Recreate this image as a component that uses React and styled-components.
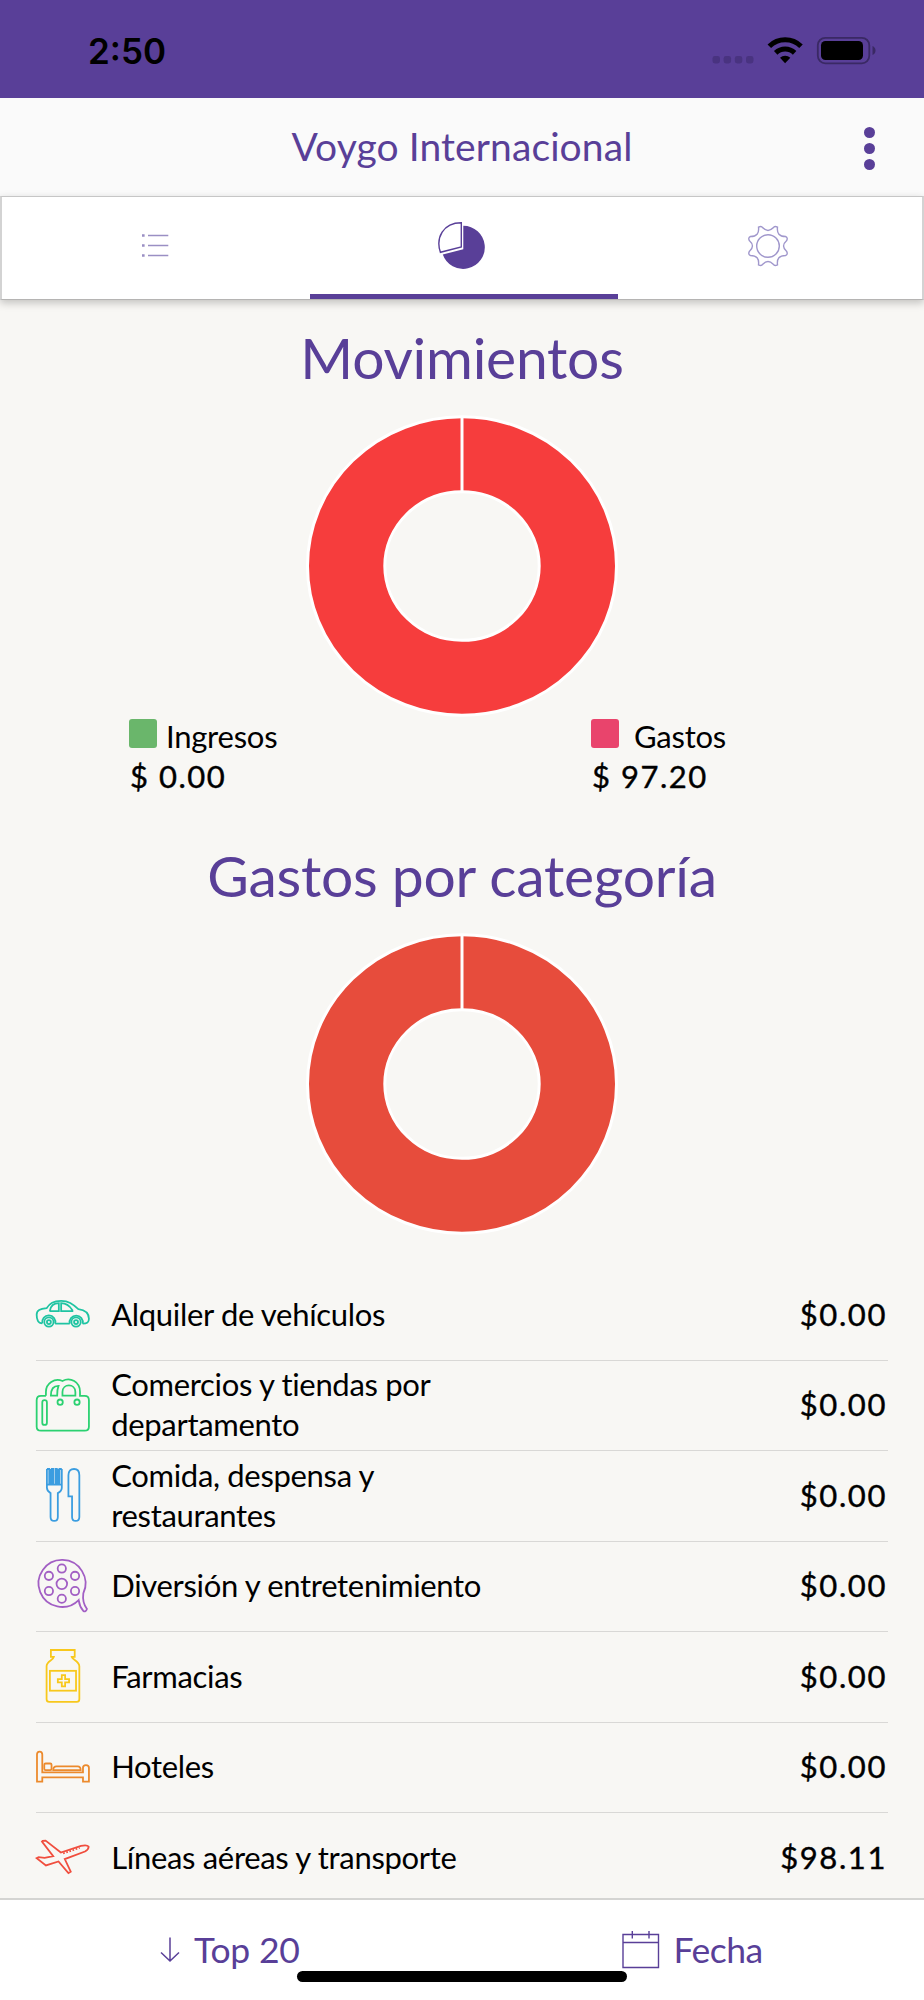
import styled, { createGlobalStyle } from "styled-components";

const categories = [
  { name: "Alquiler de vehículos", amount: "$0.00", color: "#1fc4a2", icon: <CarIcon /> },
  { name: "Comercios y tiendas por departamento", amount: "$0.00", color: "#2bd171", icon: <BagIcon /> },
  { name: "Comida, despensa y restaurantes", amount: "$0.00", color: "#3b9de0", icon: <CutleryIcon /> },
  { name: "Diversión y entretenimiento", amount: "$0.00", color: "#a25fc4", icon: <ReelIcon /> },
  { name: "Farmacias", amount: "$0.00", color: "#f8c81c", icon: <BottleIcon /> },
  { name: "Hoteles", amount: "$0.00", color: "#ec8a2c", icon: <BedIcon /> },
  { name: "Líneas aéreas y transporte", amount: "$98.11", color: "#f04e3e", icon: <PlaneIcon /> },
];

function CarIcon() {
  return (
    <>
      <path d="M19 110C6 110 2 98 2 84C2 70 12 66 32 64C42 50 52 42 76 42C98 42 110 50 128 67C150 70 160 78 160 96C160 106 156 111 141 111M58 111H102" />
      <path d="M19 110A20 20 0 1 1 58 111M102 111A20 20 0 1 1 141 111" />
      <path d="M42 72C45 54 54 49 69 49V73H44ZM76 49C92 49 101 56 110 70V73H76Z" />
      <circle cx="39" cy="106" r="14" />
      <circle cx="39" cy="106" r="6" />
      <circle cx="121" cy="106" r="14" />
      <circle cx="121" cy="106" r="6" />
    </>
  );
}

function BagIcon() {
  return (
    <>
      <path d="M30 54H15Q2 54 2 67V147Q2 159 15 159H147Q160 159 160 147V67Q160 54 147 54H133V42C133 12 104 -4 80 9C56 -1 30 16 30 42V54" />
      <path d="M45 53C45 34 52 24 68 24Q64 34 64 53ZM80 53V42C80 16 119 16 119 42V53Z" />
      <circle cx="73" cy="73" r="8" />
      <circle cx="124" cy="73" r="8" />
      <rect x="19" y="67" width="14" height="75" rx="7" />
    </>
  );
}

function CutleryIcon() {
  return (
    <>
      <path d="M33 3V60Q33 70 44 76V148Q44 160 55 160Q66 160 66 148V76Q78 70 78 60V3" />
      <path d="M33 3H40V50H33M48 50V3H52V50M59 50V3H63V50M71 50V3H78M40 50H78M44 3V50M67 3V50" />
      <path d="M98 84V22C98 8 105 3 115 3S131 10 131 22V148Q131 160 120 160T109 148V86H98Z" />
    </>
  );
}

function ReelIcon() {
  return (
    <>
      <path d="M129 124A71 71 0 1 1 143 104C140 126 145 139 154 151Q150 162 143 157C137 150 131 138 129 124Z" />
      <circle cx="78" cy="75" r="16" />
      <circle cx="78" cy="29" r="12.5" />
      <circle cx="39" cy="51" r="12.5" />
      <circle cx="118" cy="51" r="12.5" />
      <circle cx="39" cy="97" r="12.5" />
      <circle cx="118" cy="97" r="12.5" />
      <circle cx="78" cy="120" r="12.5" />
    </>
  );
}

function BottleIcon() {
  return (
    <>
      <path d="M45 3H117V24H108C110 32 131 38 131 52V152Q131 160 123 160H40Q32 160 32 152V52C32 38 52 34 54 24H45Z" />
      <rect x="42" y="66" width="79" height="60" />
      <path d="M78 79H88V91H100V101H88V113H78V101H66V91H78Z" />
    </>
  );
}

function BedIcon() {
  return (
    <>
      <path d="M3 126V44Q3 35 11 35T19 44V98H142V84Q142 76 151 76T160 84V126H142V113H19V126Z" />
      <rect x="25" y="71" width="22" height="20" rx="4" />
      <path d="M52 91Q52 80 62 80H126Q135 80 135 91Z" />
    </>
  );
}

function PlaneIcon() {
  return (
    <>
      <path d="M18 35L20 33L29 32L75 68L136 48Q154 44 159 50Q160 58 148 65L87 88L105 126L98 130L68 95L30 107L2 85L8 82L26 84L52 79Z" />
      <path d="M82 71L132 54" strokeDasharray="5 5" />
    </>
  );
}

function Donut({ color }) {
  return (
    <DonutSvg viewBox="-156 -151 312 302">
      <path
        fill={color}
        fillRule="evenodd"
        d="M0 -149.2A154.5 149.2 0 1 1 0 149.2A154.5 149.2 0 1 1 0 -149.2ZM0 -74.3A77.2 74.3 0 1 0 0 74.3A77.2 74.3 0 1 0 0 -74.3Z"
      />
      <path d="M0 -149.2V-74.3" />
    </DonutSvg>
  );
}

export default function App() {
  return (
    <Screen>
      <GlobalStyle />
      <StatusBar>
        <Clock>2:50</Clock>
        <svg width="162" height="30" viewBox="0 0 162 30">
          <g fill="#493380">
            <rect x="-1.5" y="20" width="7.5" height="7.5" rx="2.4" />
            <rect x="9.6" y="20" width="7.5" height="7.5" rx="2.4" />
            <rect x="20.8" y="20" width="7.5" height="7.5" rx="2.4" />
            <rect x="32" y="20" width="7.5" height="7.5" rx="2.4" />
          </g>
          <g fill="none" stroke="#000" strokeWidth="5">
            <path d="M55.3 10.3A22.5 22.5 0 0 1 87 10.3" />
            <path d="M61.7 16.9A13.6 13.6 0 0 1 80.6 16.9" />
          </g>
          <path d="M71.1 27.3L66 21.8A7.5 7.5 0 0 1 76.3 21.8Z" />
          <rect x="103.8" y="1.8" width="51.5" height="25.5" rx="7.5" fill="none" stroke="#3a2964" strokeWidth="1.8" />
          <rect x="107" y="5" width="42" height="19" rx="4.5" />
          <path d="M158.5 10Q161.5 11.5 161.5 14.5T158.5 19Z" fill="#3a2964" />
        </svg>
      </StatusBar>
      <Header>
        <Title>Voygo Internacional</Title>
        <MenuButton>
          <Dot />
          <Dot />
          <Dot />
        </MenuButton>
      </Header>
      <Tabs>
        <Tab>
          <svg width="28" height="28" viewBox="0 0 28 28" fill="none" stroke="#9a8fc4">
            <path d="M0 3.5H2.6M0 13.5H2.6M0 23.5H2.6" strokeWidth="2.6" />
            <path d="M6 3.5H26.3M6 13.5H26.3M6 23.5H26.3" strokeWidth="1.6" />
          </svg>
        </Tab>
        <Tab $active>
          <svg width="48" height="48" viewBox="0 0 48 48">
            <path d="M25.3 3.7A21.6 21.6 0 1 1 4.8 32.4L25.3 27.3Z" fill="#593f98" />
            <path d="M23.3 0.8V25L2.4 30.3C-2.5 16 5 0.8 23.3 0.8Z" fill="#fff" stroke="#593f98" strokeWidth="1.4" />
          </svg>
        </Tab>
        <Tab>
          <svg width="42" height="42" viewBox="-21 -21 42 42" fill="none" stroke="#a097cc" strokeWidth="1.4">
            <circle r="11.3" />
            <path d="M-5.2 -18.2Q0 -12.8 5.2 -18.2Q6.5 -20.3 9.5 -18.8Q8.3 -9.5 17.5 -9.5Q20.3 -8.3 18.5 -5.2Q12.6 0 18.5 5.2Q20.3 8.3 17.5 9.5Q8.3 9.5 9.5 18.8Q6.5 20.3 5.2 18.2Q0 12.8 -5.2 18.2Q-6.5 20.3 -9.5 18.8Q-8.3 9.5 -17.5 9.5Q-20.3 8.3 -18.5 5.2Q-12.6 0 -18.5 -5.2Q-20.3 -8.3 -17.5 -9.5Q-8.3 -9.5 -9.5 -18.8Q-6.5 -20.3 -5.2 -18.2Z" />
          </svg>
        </Tab>
      </Tabs>
      <Content>
        <SectionTitle>Movimientos</SectionTitle>
        <Donut color="#f63d3d" />
        <Legend>
          <LegendItem>
            <LegendLabel $gap="9px">
              <Swatch $color="#6ab66b" />
              Ingresos
            </LegendLabel>
            <LegendAmount>$ 0.00</LegendAmount>
          </LegendItem>
          <LegendItem>
            <LegendLabel $gap="15px">
              <Swatch $color="#e9446c" />
              Gastos
            </LegendLabel>
            <LegendAmount>$ 97.20</LegendAmount>
          </LegendItem>
        </Legend>
        <SectionTitle>Gastos por categoría</SectionTitle>
        <Donut color="#e74c3c" />
        <List>
          {categories.map((category) => (
            <Row key={category.name}>
              <CategoryIcon viewBox="0 0 162 162" $color={category.color}>
                {category.icon}
              </CategoryIcon>
              <CategoryName>{category.name}</CategoryName>
              <Amount>{category.amount}</Amount>
            </Row>
          ))}
        </List>
      </Content>
      <Footer>
        <FooterButton $left="160px" $gap="14px" $spacing="-0.2px">
          <svg width="20" height="32" viewBox="0 0 20 32" fill="none" stroke="#593f98" strokeWidth="1.5">
            <path d="M10 4.5V28M1 19.5L10 28L19 19.5" />
          </svg>
          Top 20
        </FooterButton>
        <FooterButton $left="159px" $gap="14px" $spacing="-0.5px">
          <svg width="38" height="40" viewBox="0 0 38 40" fill="none" stroke="#593f98" strokeWidth="1.4">
            <path d="M1 5.5H36.5V38.5H1ZM1 13.5H36.5M10.3 2V9.5M27 2V9.5" />
          </svg>
          Fecha
        </FooterButton>
        <HomeIndicator />
      </Footer>
    </Screen>
  );
}

const GlobalStyle = createGlobalStyle`
  * {
    box-sizing: border-box;
  }
  body {
    margin: 0;
  }
`;

const Screen = styled.div`
  display: flex;
  flex-direction: column;
  width: 924px;
  height: 2000px;
  overflow: hidden;
  background: #f8f7f4;
  color: #000;
  font-family: Lato, "Liberation Sans", sans-serif;
`;

const StatusBar = styled.div`
  display: flex;
  flex: none;
  justify-content: space-between;
  height: 98px;
  padding: 36px 48px 0 88px;
  background: #593f98;

  svg {
    overflow: visible;
  }
`;

const Clock = styled.span`
  font-family: Inter, sans-serif;
  font-size: 35px;
  font-weight: 600;
  line-height: 30px;
`;

const Header = styled.header`
  position: relative;
  display: flex;
  flex: none;
  justify-content: center;
  height: 98px;
  padding-top: 24px;
  background: #fafafa;
`;

const Title = styled.h1`
  margin: 0;
  color: #593f98;
  font-size: 39px;
  font-weight: 400;
  line-height: 48px;
  letter-spacing: 0.1px;
`;

const MenuButton = styled.div`
  position: absolute;
  top: 28.5px;
  right: 49.5px;
  display: flex;
  flex-direction: column;
  gap: 5.2px;
`;

const Dot = styled.i`
  width: 11px;
  height: 11px;
  border-radius: 50%;
  background: #593f98;
`;

const Tabs = styled.nav`
  display: flex;
  flex: none;
  justify-content: center;
  height: 104px;
  border: solid #d3d3d3;
  border-width: 1px 2px;
  border-top-color: #c6c6c6;
  border-bottom-color: #b5b4b3;
  background: #fff;
  box-shadow: 0 3px 8px rgba(0, 0, 0, 0.22);
  z-index: 1;
`;

const Tab = styled.div`
  display: flex;
  flex: none;
  align-items: center;
  justify-content: center;
  width: ${(p) => (p.$active ? 308 : 306)}px;
  border-bottom: 5px solid ${(p) => (p.$active ? "#593f98" : "transparent")};

  &:first-child {
    padding-left: 1px;
  }
  &:last-child {
    padding-right: 3px;
  }
  &:nth-child(2) {
    margin: 0 -2px 0 2px;
    padding-right: 5px;
  }
`;

const Content = styled.main`
  flex: 1;
  min-height: 0;
  padding-top: 22px;
  overflow: hidden;
`;

const SectionTitle = styled.h2`
  margin: 0;
  color: #593f98;
  font-size: 57px;
  font-weight: 400;
  line-height: 70px;
  letter-spacing: -0.25px;
  text-align: center;
`;

const DonutSvg = styled.svg`
  display: block;
  width: 312px;
  height: 302px;
  margin: 22.5px auto 0;
  overflow: visible;
  stroke: #fff;
  stroke-width: 3;
`;

const Legend = styled.div`
  display: flex;
  margin: -1px 0 44.5px;
`;

const LegendItem = styled.div`
  flex: 1;
  padding-left: 129px;
  font-size: 31px;
  line-height: 40px;
`;

const LegendLabel = styled.div`
  display: flex;
  gap: ${(p) => p.$gap};
  letter-spacing: -0.25px;
`;

const Swatch = styled.span`
  width: 28px;
  height: 28.5px;
  margin-top: 3.5px;
  border-radius: 3px;
  background: ${(p) => p.$color};
`;

const LegendAmount = styled.div`
  padding-left: 1px;
  letter-spacing: 1.5px;
  -webkit-text-stroke: 0.4px #000;
`;

const List = styled.ul`
  margin: 35.5px 36px 0;
  padding: 0;
  list-style: none;
`;

const Row = styled.li`
  display: flex;
  align-items: center;
  height: 90.5px;
  padding-bottom: 2px;
  border-bottom: 1px solid #d9d8d6;
`;

const CategoryIcon = styled.svg`
  flex: none;
  width: 53.6px;
  height: 53.6px;
  margin: 1px 22px 0 -0.4px;
  overflow: visible;
  fill: none;
  stroke: ${(p) => p.$color};
  stroke-width: 5.4;
`;

const CategoryName = styled.span`
  width: 390px;
  font-size: 31px;
  line-height: 40px;
  letter-spacing: -0.32px;
`;

const Amount = styled.span`
  margin-left: auto;
  padding-right: 1px;
  font-size: 31px;
  line-height: 40px;
  letter-spacing: 1.6px;
  -webkit-text-stroke: 0.4px #000;
`;

const Footer = styled.footer`
  position: relative;
  display: flex;
  flex: none;
  height: 102px;
  padding-top: 29px;
  border-top: 2px solid #d4d4d2;
  background: #fff;
`;

const FooterButton = styled.div`
  display: flex;
  flex: 1;
  align-items: center;
  gap: ${(p) => p.$gap};
  height: 40px;
  padding-left: ${(p) => p.$left};
  color: #593f98;
  font-size: 35.5px;
  letter-spacing: ${(p) => p.$spacing};
`;

const HomeIndicator = styled.div`
  position: absolute;
  left: 297px;
  bottom: 18px;
  width: 330px;
  height: 11px;
  border-radius: 6px;
  background: #000;
`;
